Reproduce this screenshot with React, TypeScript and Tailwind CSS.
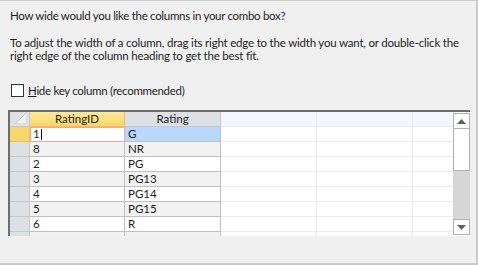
const rows = [
  { id: "1", rating: "G" },
  { id: "8", rating: "NR" },
  { id: "2", rating: "PG" },
  { id: "3", rating: "PG13" },
  { id: "4", rating: "PG14" },
  { id: "5", rating: "PG15" },
  { id: "6", rating: "R" },
];

const font = { fontFamily: '"Segoe UI", Lato, "Liberation Sans", sans-serif' };

export default function App() {
  return (
    <div
      className="h-[265px] w-[478px] overflow-hidden border-t border-r-2 border-b-2 border-[#c8c8c8] bg-[#f0f0f0] text-[11.5px] text-[#1e1e1e]"
      style={font}
    >
      {/* Prompt */}
      <div className="px-[10px] pt-[8px] leading-[13px] whitespace-nowrap">
        <p className="tracking-[-0.3px]">How wide would you like the columns in your combo box?</p>
        <p className="mt-[14px] tracking-[-0.2px]">
          To adjust the width of a column, drag its right edge to the width you want, or double-click the
          <br />
          right edge of the column heading to get the best fit.
        </p>
      </div>

      {/* Checkbox */}
      <label className="mt-[21px] ml-[11px] flex items-center gap-[4px] leading-[15px] tracking-[-0.3px]">
        <span className="h-[13px] w-[13px] border border-[#333] bg-white" />
        <span>
          <span className="underline">H</span>ide key column (recommended)
        </span>
      </label>

      {/* Grid */}
      <div className="mt-[12px] ml-[8px] flex h-[126px] w-[462px] border-t-2 border-l-2 border-t-[#6d6d6d] border-l-[#6d6d6d] bg-white">
        <div className="flex w-[443px] flex-col overflow-hidden">
          {/* Header */}
          <div className="flex h-[15px] shrink-0 leading-[14px]">
            <div className="relative w-[20px] shrink-0 border-r border-b border-[#c4c8ce] bg-[#dde1e6]">
              <svg className="absolute right-[2px] bottom-[2px]" width="12" height="12" viewBox="0 0 12 12">
                <path d="M12 0 L12 12 L0 12 Z" fill="#eef0f3" stroke="#c6cad0" strokeWidth="1" />
              </svg>
            </div>
            <div className="w-[95px] shrink-0 border-r border-b border-[#e8c15a] bg-gradient-to-b from-[#fde99a] to-[#f9d66a] text-center">
              RatingID
            </div>
            <div className="w-[96px] shrink-0 border-r border-b border-[#c4c8ce] bg-[#dde1e6] text-center">
              Rating
            </div>
            <div className="w-[96px] shrink-0 border-r border-b border-[#e6e8f0] bg-[#f5f6fd]" />
            <div className="w-[96px] shrink-0 border-r border-b border-[#e6e8f0] bg-[#f5f6fd]" />
            <div className="w-[60px] shrink-0 border-b border-[#e6e8f0] bg-[#f5f6fd]" />
          </div>

          {/* Rows */}
          {[...rows, { id: "", rating: "" }].map((r, i) => (
            <div key={i} className="flex h-[15px] shrink-0 leading-[14px]">
              <div
                className={`w-[20px] shrink-0 border-r border-b ${
                  i === 0 ? "border-[#e8c15a] bg-[#f9d66a]" : "border-[#c4c8ce] bg-[#dde1e6]"
                }`}
              />
              <div
                className={`w-[95px] shrink-0 border-r border-b pl-[3px] ${
                  i === 0
                    ? "border-[#f4a3a3] bg-white outline outline-1 -outline-offset-1 outline-[#f4a3a3]"
                    : i % 2 === 1
                    ? "border-[#c0c0c0] bg-[#f2f2f2]"
                    : "border-[#c0c0c0] bg-white"
                }`}
              >
                {r.id}
                {i === 0 && <span className="ml-[1px] inline-block h-[11px] w-px translate-y-[2px] bg-black" />}
              </div>
              <div
                className={`w-[96px] shrink-0 border-r border-b border-[#c0c0c0] pl-[3px] ${
                  i === 0 ? "bg-[#b8d9fb]" : i % 2 === 1 ? "bg-[#f2f2f2]" : "bg-white"
                }`}
              >
                {r.rating}
              </div>
              <div className="w-[96px] shrink-0 border-r border-b border-[#ececec]" />
              <div className="w-[96px] shrink-0 border-r border-b border-[#ececec]" />
              <div className="w-[60px] shrink-0 border-b border-[#ececec]" />
            </div>
          ))}
        </div>

        {/* Scrollbar */}
        <div className="mt-[1px] flex w-[17px] flex-col">
          <div className="flex h-[16px] items-center justify-center border border-[#b0b0b0] bg-white">
            <svg width="9" height="5" viewBox="0 0 9 5">
              <path d="M4.5 0 L9 5 L0 5 Z" fill="#606060" />
            </svg>
          </div>
          <div className="h-[42px] border border-t-0 border-[#b0b0b0] bg-white" />
          <div className="h-[48px] bg-[#d6d6d6]" />
          <div className="flex h-[16px] items-center justify-center border border-[#b0b0b0] bg-white">
            <svg width="9" height="5" viewBox="0 0 9 5">
              <path d="M0 0 L9 0 L4.5 5 Z" fill="#606060" />
            </svg>
          </div>
        </div>
      </div>
    </div>
  );
}
